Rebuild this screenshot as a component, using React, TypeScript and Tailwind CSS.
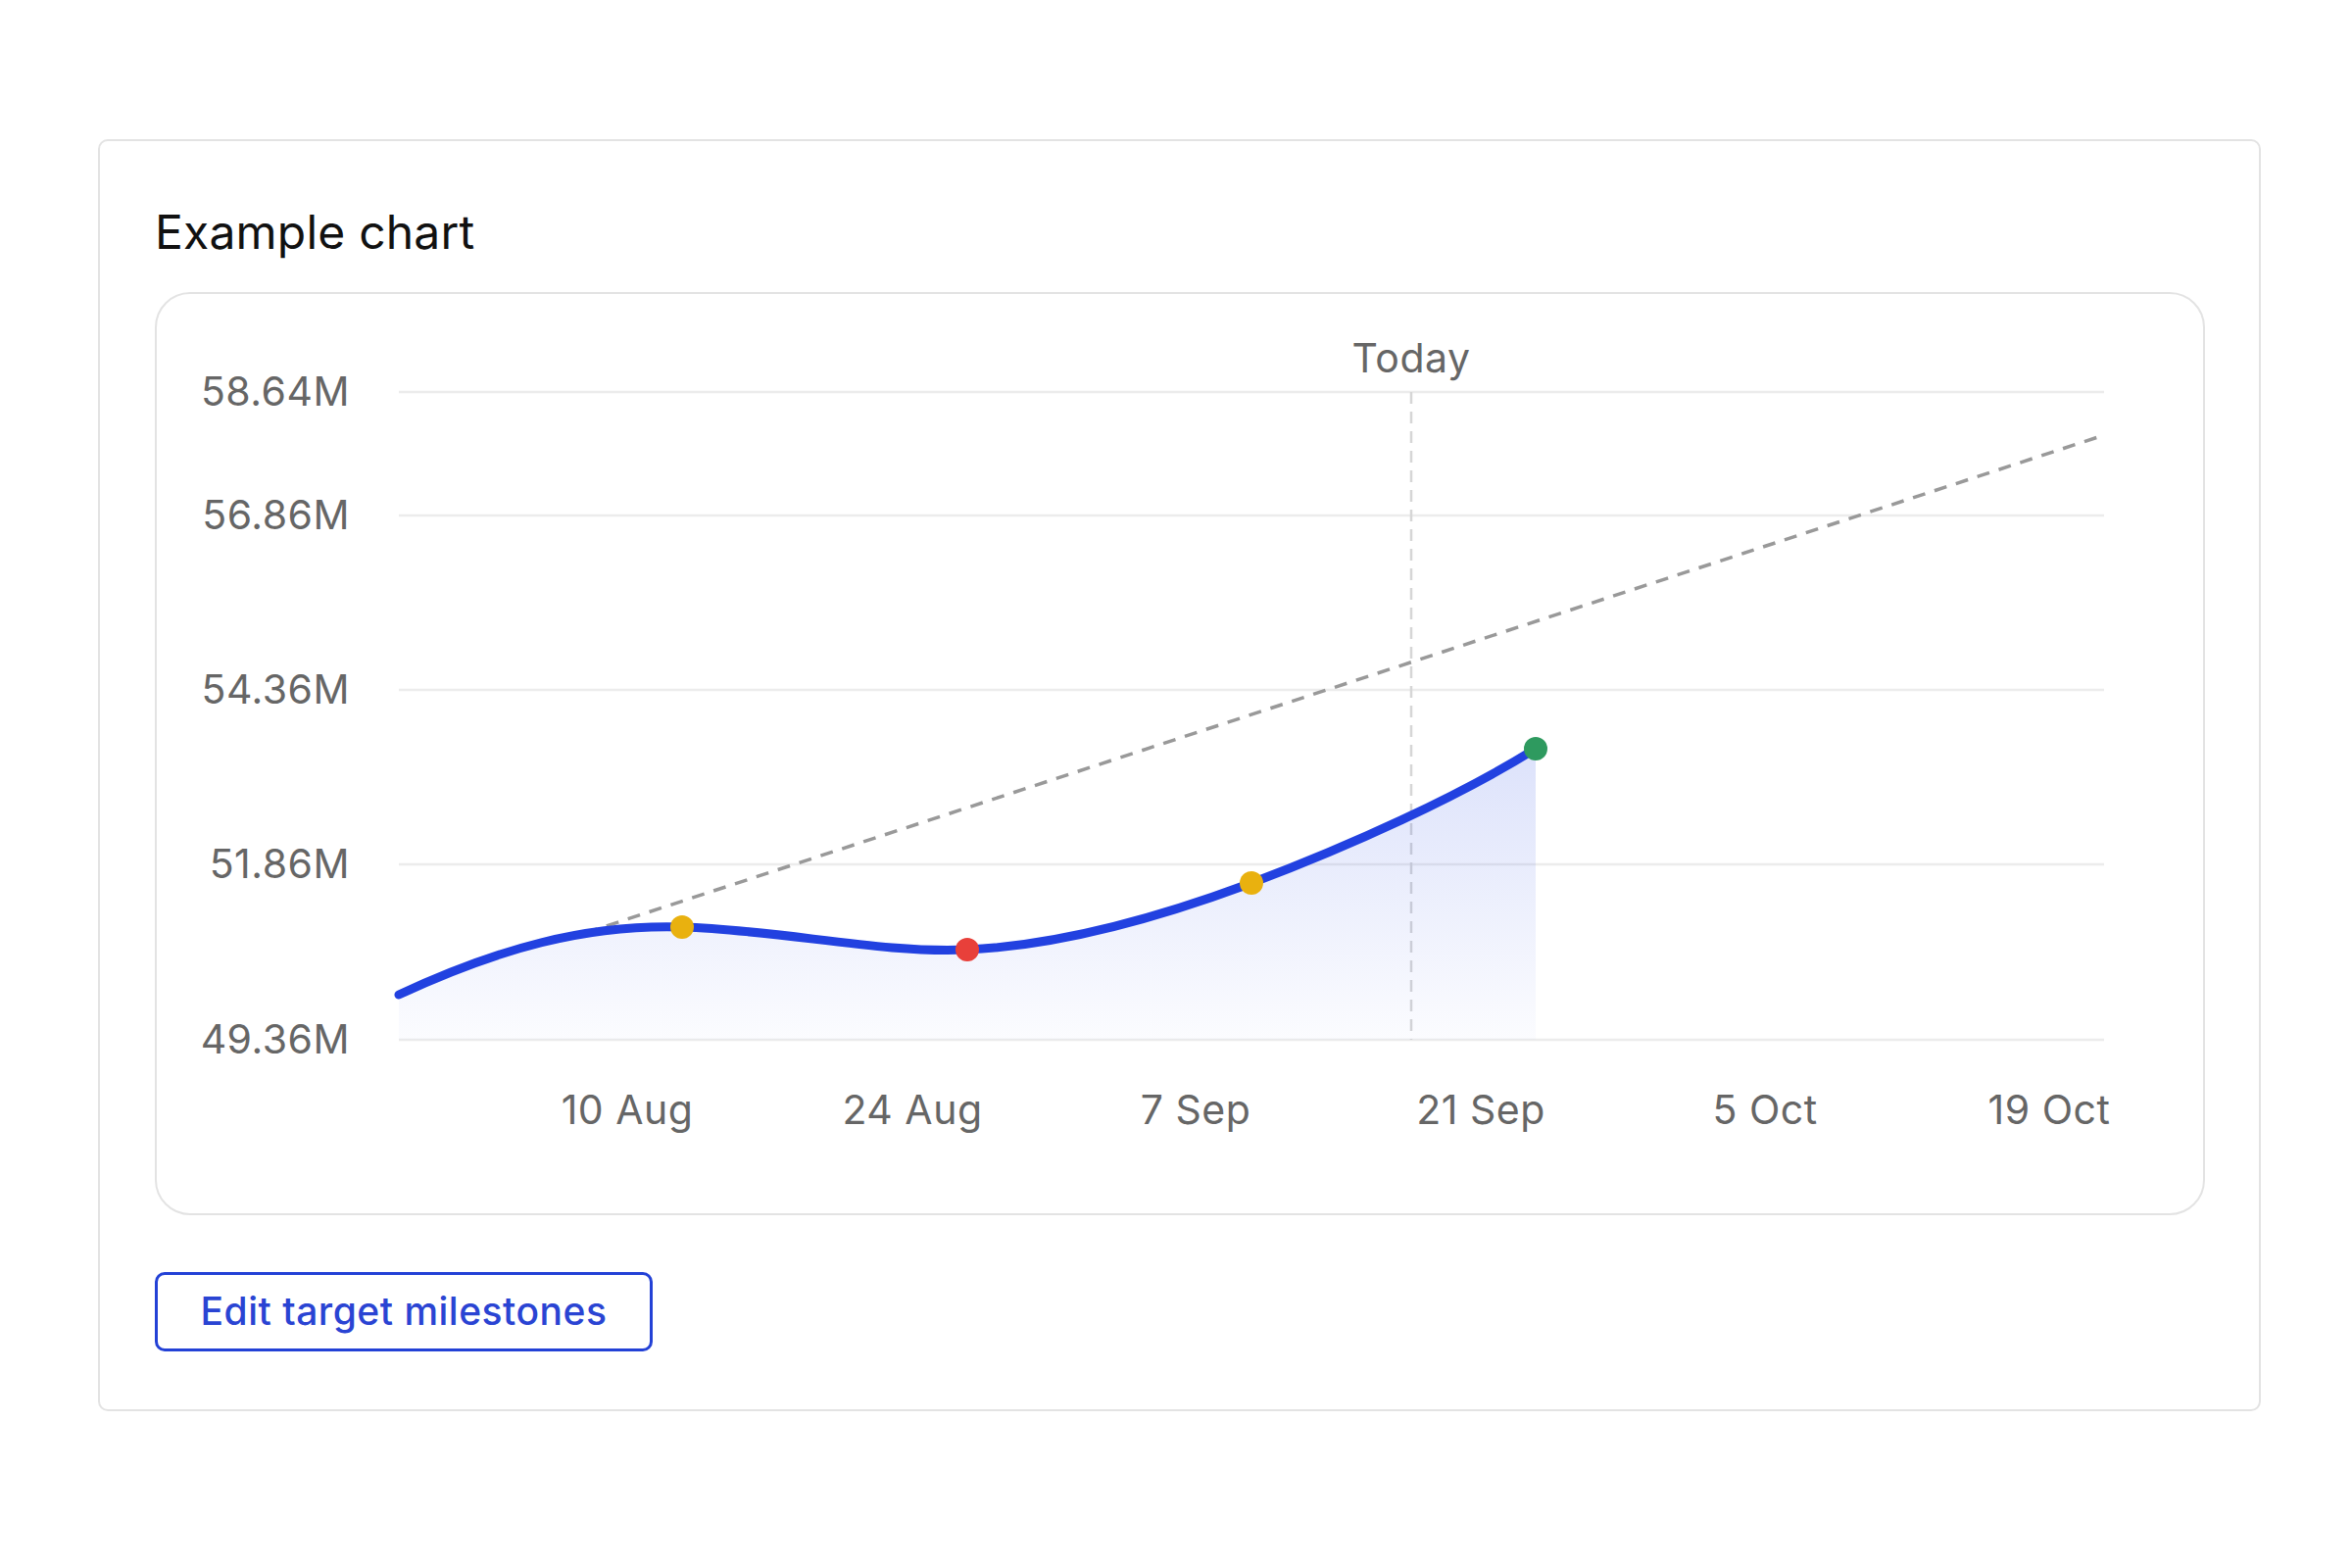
export default function App() {
  const yLabels = [
    { t: "58.64M", y: 102 },
    { t: "56.86M", y: 228 },
    { t: "54.36M", y: 406 },
    { t: "51.86M", y: 584 },
    { t: "49.36M", y: 763 },
  ];
  const xLabels = [
    { t: "10 Aug", x: 482 },
    { t: "24 Aug", x: 773 },
    { t: "7 Sep", x: 1062 },
    { t: "21 Sep", x: 1353 },
    { t: "5 Oct", x: 1643 },
    { t: "19 Oct", x: 1933 },
  ];
  const curve =
    "M249,717 C350,670 440,645 538,648 C640,651 740,675 829,671 C920,667 1020,640 1119,603 C1220,565 1330,515 1409,466";
  return (
    <div className="min-h-[1600px] w-[2400px] bg-white" style={{ fontFamily: "Inter, 'Noto Sans', sans-serif" }}>
      <div className="ml-[100px] pt-[142px]">
        <div className="w-[2207px] h-[1298px] border-2 border-[#e3e3e3] rounded-[10px] pl-[56px] pt-[65px]">
          <div className="text-[48px] leading-[56px] text-[#111] tracking-[0.2px]">Example chart</div>
          <div className="mt-[33px] w-[2092px] h-[942px] border-2 border-[#e3e3e3] rounded-[36px]">
            <svg width="2088" height="938" viewBox="2 2 2088 938">
              <defs>
                <linearGradient id="fill" x1="0" y1="0" x2="0" y2="1">
                  <stop offset="0" stopColor="#3f5ee8" stopOpacity="0.18" />
                  <stop offset="1" stopColor="#3f5ee8" stopOpacity="0.02" />
                </linearGradient>
              </defs>
              {yLabels.map((l) => (
                <g key={l.t}>
                  <line x1="249" x2="1989" y1={l.y} y2={l.y} stroke="#ececec" strokeWidth="2.5" />
                  <text x="199" y={l.y + 14} textAnchor="end" fontSize="41" letterSpacing="0.5" fill="#666" fontFamily="Inter, sans-serif">
                    {l.t}
                  </text>
                </g>
              ))}
              {xLabels.map((l) => (
                <text key={l.t} x={l.x} y={849} textAnchor="middle" fontSize="41" letterSpacing="0.5" fill="#666" fontFamily="Inter, sans-serif">
                  {l.t}
                </text>
              ))}
              <line x1="1282" x2="1282" y1="102" y2="763" stroke="#d6d6d6" strokeWidth="2.5" strokeDasharray="12 8" />
              <text x="1282" y="82" textAnchor="middle" fontSize="41" letterSpacing="0.5" fill="#666" fontFamily="Inter, sans-serif">
                Today
              </text>
              <path d={`${curve} L1409,763 L249,763 Z`} fill="url(#fill)" />
              <line x1="439" y1="654" x2="1989" y2="146" stroke="#999" strokeWidth="3.5" strokeDasharray="13 10" />
              <path d={curve} fill="none" stroke="#2241e0" strokeWidth="9" strokeLinecap="round" />
              <circle cx="538" cy="648" r="12" fill="#e9b10f" />
              <circle cx="829" cy="671" r="12" fill="#e8403a" />
              <circle cx="1119" cy="603" r="12" fill="#e9b10f" />
              <circle cx="1409" cy="466" r="12" fill="#2e9a5f" />
            </svg>
          </div>
          <button className="mt-[58px] w-[508px] h-[81px] border-[3px] border-[#2341d6] rounded-[10px] text-[39px] font-medium tracking-[0.5px] text-[#2a44d3] bg-white">
            Edit target milestones
          </button>
        </div>
      </div>
    </div>
  );
}
